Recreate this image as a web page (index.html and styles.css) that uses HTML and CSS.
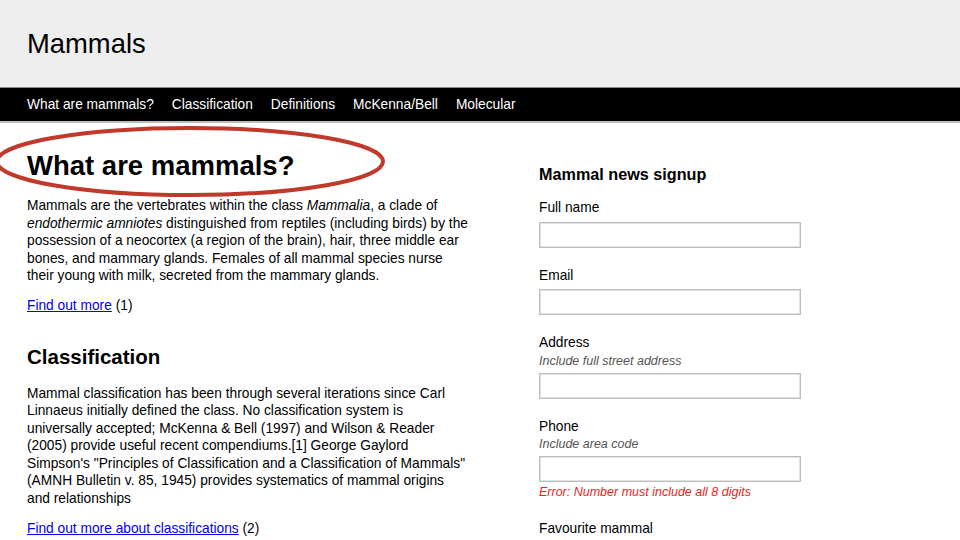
FILE: index.html
```html
<!DOCTYPE html>
<html lang="en">
<head>
<meta charset="utf-8">
<title>Mammals</title>
<link rel="stylesheet" href="styles.css">
</head>
<body>
<header class="site-header">
  <h1 class="site-title">Mammals</h1>
</header>
<nav class="site-nav">
  <a href="#">What are mammals?</a>
  <a href="#">Classification</a>
  <a href="#">Definitions</a>
  <a href="#">McKenna/Bell</a>
  <a href="#">Molecular</a>
</nav>
<main class="layout">
  <section class="content">
    <div class="highlight-wrap">
      <h2 class="h-main">What are mammals?</h2>
      <svg class="annotation" width="400" height="84" viewBox="0 0 400 84" aria-hidden="true">
        <ellipse cx="193" cy="41.5" rx="193" ry="33.5" fill="none" stroke="#c0392b" stroke-width="4"/>
      </svg>
    </div>
    <p class="text">Mammals are the vertebrates within the class <em>Mammalia</em>, a clade of <em>endothermic amniotes</em> distinguished from reptiles (including birds) by the possession of a neocortex (a region of the brain), hair, three middle ear bones, and mammary glands. Females of all mammal species nurse their young with milk, secreted from the mammary glands.</p>
    <p class="more"><a href="#">Find out more</a> (1)</p>
    <h2 class="h-sub">Classification</h2>
    <p class="text">Mammal classification has been through several iterations since Carl Linnaeus initially defined the class. No classification system is universally accepted; McKenna &amp; Bell (1997) and Wilson &amp; Reader (2005) provide useful recent compendiums.[1] George Gaylord Simpson's "Principles of Classification and a Classification of Mammals" (AMNH Bulletin v. 85, 1945) provides systematics of mammal origins and relationships</p>
    <p class="more"><a href="#">Find out more about classifications</a> (2)</p>
  </section>
  <aside class="signup">
    <h3 class="signup-title">Mammal news signup</h3>
    <div class="field">
      <label class="label">Full name</label>
      <input class="input" type="text">
    </div>
    <div class="field">
      <label class="label">Email</label>
      <input class="input" type="text">
    </div>
    <div class="field">
      <label class="label">Address</label>
      <span class="hint">Include full street address</span>
      <input class="input" type="text">
    </div>
    <div class="field">
      <label class="label">Phone</label>
      <span class="hint">Include area code</span>
      <input class="input" type="text">
      <span class="error">Error: Number must include all 8 digits</span>
    </div>
    <div class="field">
      <label class="label">Favourite mammal</label>
    </div>
  </aside>
</main>
</body>
</html>
```
FILE: styles.css
```css
* { box-sizing: border-box; }
html, body { margin: 0; padding: 0; }
body {
  font-family: "Liberation Sans", Arial, Helvetica, sans-serif;
  color: #000;
  background: #fff;
  font-size: 13.75px;
  line-height: 17.5px;
}
.site-header {
  background: #eeeeee;
  height: 88px;
  border-bottom: 1px solid #8a8a8a;
  padding: 29px 27px 0;
}
.site-title {
  margin: 0;
  font-size: 27.4px;
  font-weight: normal;
  line-height: 30px;
}
.site-nav {
  background: #000;
  height: 35px;
  border-bottom: 2px solid #bdbdbd;
  display: flex;
  align-items: center;
  gap: 18px;
  padding: 0 27px 0;
}
.site-nav a {
  color: #fff;
  text-decoration: none;
  font-size: 13.75px;
}
.layout {
  display: flex;
  padding-left: 27px;
}
.content {
  width: 443px;
  flex: none;
}
.highlight-wrap {
  position: relative;
}
.annotation {
  position: absolute;
  left: -30px;
  top: -30px;
  pointer-events: none;
}
.h-main {
  margin: 27px 0 0;
  font-size: 27.5px;
  line-height: 32px;
  font-weight: bold;
}
.text {
  margin: 15px 0 0;
}
.text em { font-style: italic; }
.more {
  margin: 12.5px 0 0;
}
.more a { color: #0000ee; text-decoration: underline; }
.h-sub {
  margin: 29px 0 0;
  font-size: 20.5px;
  line-height: 26px;
  font-weight: bold;
}
.signup {
  margin-left: 69px;
  width: 262px;
  flex: none;
  padding-top: 41px;
}
.signup-title {
  margin: 0 0 15px;
  font-size: 16.2px;
  line-height: 20px;
  font-weight: bold;
}
.field {
  display: flex;
  flex-direction: column;
  margin-bottom: 19px;
}
.label {
  display: block;
}
.hint {
  display: block;
  font-size: 12.5px;
  line-height: 18px;
  font-style: italic;
  color: #555;
}
.input {
  margin-top: 5px;
  width: 262px;
  height: 26px;
  border: 1px solid #bdbdbd;
  box-shadow: inset 0 0 0 1px #e2e2e2;
  background: #fff;
  padding: 0 4px;
  font: inherit;
}
.hint + .input { margin-top: 3px; }
.error {
  display: block;
  margin-top: 1px;
  font-size: 12.5px;
  line-height: 18px;
  font-style: italic;
  color: #e8261e;
}
```
